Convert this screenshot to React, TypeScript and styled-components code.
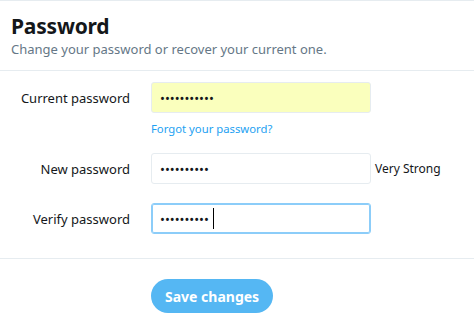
import React from "react";
import styled, { createGlobalStyle } from "styled-components";

const Global = createGlobalStyle`
  html, body { margin: 0; padding: 0; background: #fff; }
  body { font-family: "Segoe UI", "Noto Sans", Arial, sans-serif; color: #14171a; }
  * { box-sizing: border-box; }
`;

const Page = styled.div`
  width: 474px;
  height: 323px;
  border-top: 1px solid #e6ecf0;
  background: #fff;
  overflow: hidden;
`;

const Header = styled.header`
  padding: 11px 11px 12px;
  border-bottom: 1px solid #e6ecf0;
`;

const Title = styled.h1`
  margin: 0;
  font-size: 21px;
  line-height: 28px;
  font-weight: 700;
  letter-spacing: -0.2px;
  color: #14171a;
`;

const Subtitle = styled.p`
  margin: 0;
  font-size: 13px;
  line-height: 18px;
  color: #657786;
`;

const Form = styled.form`
  display: flex;
  flex-direction: column;
  padding: 11px 0 24px;
  border-bottom: 1px solid #e6ecf0;
`;

const Row = styled.div<{ $gap?: number }>`
  display: grid;
  grid-template-columns: 130px 220px auto;
  column-gap: 21px;
  align-items: center;
  margin-top: ${(p) => p.$gap ?? 0}px;
`;

const Label = styled.label`
  justify-self: end;
  font-size: 13px;
  color: #14171a;
`;

const Field = styled.div`
  position: relative;
  width: 220px;
  height: 31px;
`;

const Input = styled.input<{ $autofill?: boolean; $focused?: boolean }>`
  width: 220px;
  height: 31px;
  padding: 0 8px;
  font-size: 13px;
  font-family: inherit;
  color: #14171a;
  caret-color: transparent;
  background: ${(p) => (p.$autofill ? "#faffbd" : "#fff")};
  border: 1px solid ${(p) => (p.$focused ? "#8ccdf9" : "#e6ecf0")};
  border-radius: 3px;
  box-shadow: ${(p) => (p.$focused ? "inset 0 0 0 1px #8ccdf9" : "none")};
  outline: none;
`;

const Caret = styled.span`
  position: absolute;
  left: 62px;
  top: 5px;
  width: 1px;
  height: 21px;
  background: #000;
`;

const Helper = styled.a`
  grid-column: 2;
  font-size: 11.3px;
  line-height: 16px;
  color: #1da1f2;
  text-decoration: none;
`;

const Strength = styled.span`
  margin-left: -17px;
  font-size: 12px;
  color: #14171a;
`;

const Actions = styled.div`
  padding: 20px 0 0 151px;
`;

const SaveButton = styled.button`
  height: 34px;
  padding: 0 14px;
  border: none;
  border-radius: 17px;
  background: #55b7f3;
  color: #fff;
  font-family: inherit;
  font-size: 14px;
  font-weight: 700;
`;

export default function App() {
  return (
    <>
      <Global />
      <Page>
        <Header>
          <Title>Password</Title>
          <Subtitle>Change your password or recover your current one.</Subtitle>
        </Header>
        <Form onSubmit={(e) => e.preventDefault()}>
          <Row>
            <Label>Current password</Label>
            <Input type="password" $autofill defaultValue="12345678901" readOnly />
          </Row>
          <Row $gap={8}>
            <span />
            <Helper href="#">Forgot your password?</Helper>
          </Row>
          <Row $gap={16}>
            <Label>New password</Label>
            <Input type="password" defaultValue="1234567890" readOnly />
            <Strength>Very Strong</Strength>
          </Row>
          <Row $gap={19}>
            <Label>Verify password</Label>
            <Field>
              <Input type="password" $focused defaultValue="1234567890" readOnly />
              <Caret />
            </Field>
          </Row>
        </Form>
        <Actions>
          <SaveButton type="button">Save changes</SaveButton>
        </Actions>
      </Page>
    </>
  );
}
